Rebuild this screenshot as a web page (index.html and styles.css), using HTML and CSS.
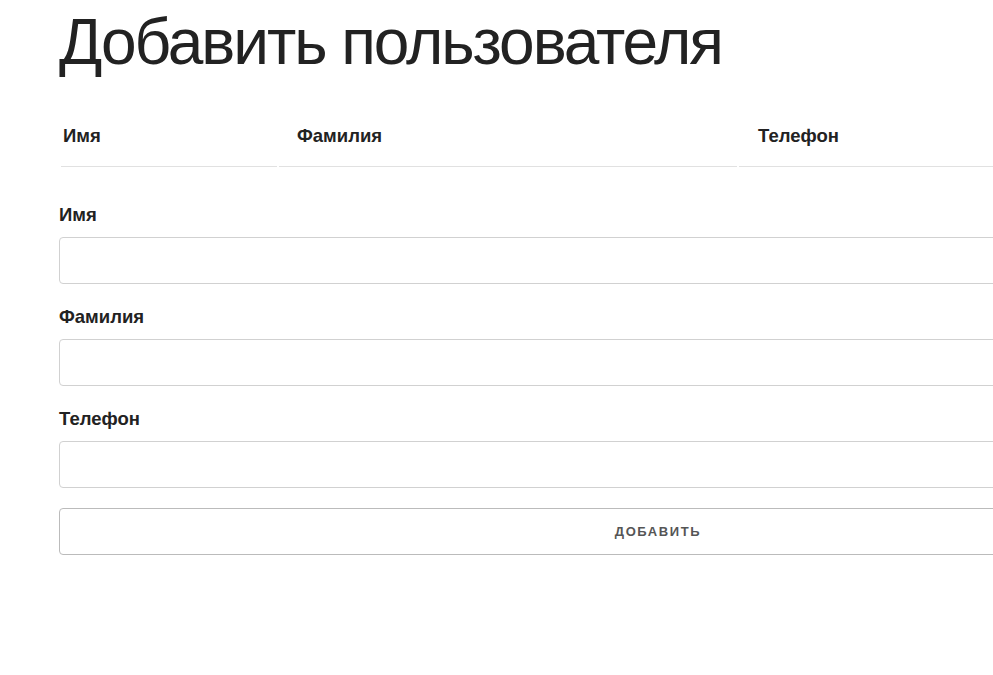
FILE: index.html
```html
<!DOCTYPE html>
<html lang="ru">
<head>
<meta charset="utf-8">
<title>Добавить пользователя</title>
<link rel="stylesheet" href="styles.css">
</head>
<body>
<div class="page">
  <h1 class="title">Добавить пользователя</h1>
  <table class="users">
    <thead>
      <tr>
        <th class="col-name">Имя</th>
        <th class="col-surname">Фамилия</th>
        <th class="col-phone">Телефон</th>
      </tr>
    </thead>
    <tbody></tbody>
  </table>
  <form class="form">
    <label class="label" for="name">Имя</label>
    <input class="input" id="name" type="text">
    <label class="label" for="surname">Фамилия</label>
    <input class="input" id="surname" type="text">
    <label class="label" for="phone">Телефон</label>
    <input class="input" id="phone" type="text">
    <button class="button" type="button">Добавить</button>
  </form>
</div>
</body>
</html>
```
FILE: styles.css
```css
html, body {
  margin: 0;
  padding: 0;
  background: #fff;
}
body {
  font-family: "Liberation Sans", Arial, sans-serif;
  color: #222;
  overflow: hidden;
}
.page {
  width: 1198px;
  padding-left: 59px;
}
.title {
  margin: 0;
  padding-top: 4px;
  font-size: 64px;
  font-weight: 400;
  line-height: 76px;
  letter-spacing: -2.05px;
  color: #222;
}
.users {
  width: 100%;
  margin-top: 35px;
  border-collapse: separate;
  border-spacing: 2px;
}
.users th {
  text-align: left;
  font-size: 18.5px;
  font-weight: 700;
  padding: 8px 2px 19px;
  border-bottom: 1px solid #e1e1e1;
}
.col-name { width: 212px; }
.col-surname { width: 438px; padding-left: 18px !important; }
.col-phone { padding-left: 19px !important; }
.form {
  display: flex;
  flex-direction: column;
  margin-top: 36px;
}
.label {
  font-size: 18.5px;
  font-weight: 700;
  line-height: 20px;
  margin-bottom: 12px;
}
.input {
  box-sizing: border-box;
  height: 47px;
  border: 1px solid #d1d1d1;
  border-radius: 4px;
  margin: 0 0 23px;
  padding: 6px 10px;
  font-size: 15px;
}
.button {
  box-sizing: border-box;
  height: 47px;
  margin-top: -3px;
  border: 1px solid #bbb;
  border-radius: 4px;
  background: #fff;
  color: #555;
  font-family: "Liberation Sans", Arial, sans-serif;
  font-size: 13px;
  font-weight: 700;
  letter-spacing: 1.6px;
  text-transform: uppercase;
}
```
